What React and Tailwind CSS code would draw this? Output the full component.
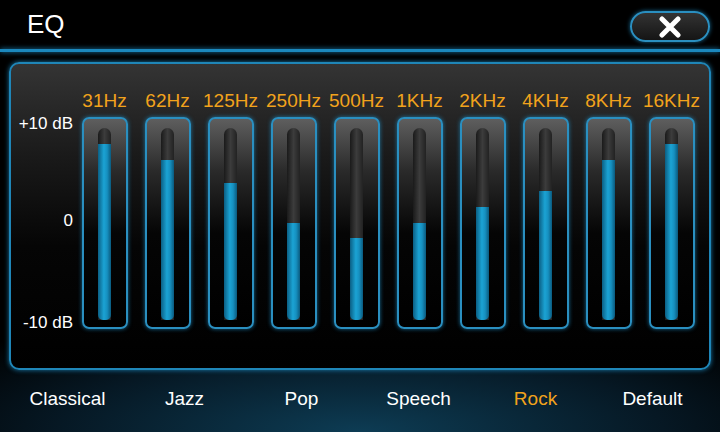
import React from 'react';

const bands = [
  { label: '31Hz', fill: 176 },
  { label: '62Hz', fill: 160 },
  { label: '125Hz', fill: 137 },
  { label: '250Hz', fill: 97 },
  { label: '500Hz', fill: 82 },
  { label: '1KHz', fill: 97 },
  { label: '2KHz', fill: 113 },
  { label: '4KHz', fill: 129 },
  { label: '8KHz', fill: 160 },
  { label: '16KHz', fill: 176 },
];

const presets = ['Classical', 'Jazz', 'Pop', 'Speech', 'Rock', 'Default'];

function Slider({ label, fill }) {
  return (
    <div className="flex flex-col items-center pt-[27px]">
      <div className="h-[19px] leading-[19px] text-[19px] text-[#f2a31c] whitespace-nowrap">{label}</div>
      {/* frame */}
      <div className="mt-[7px] w-[46px] h-[212px] rounded-[7px] border-2 border-[#2a8fc0] shadow-[0_0_4px_rgba(30,150,210,0.7)] bg-[linear-gradient(180deg,#5e5e5e_0%,#2a2a2a_25%,#050505_55%,#000_100%)] flex flex-col items-center pt-[9px]">
        {/* track */}
        <div className="w-[13px] h-[192px] rounded-t-full rounded-b-[5px] bg-[linear-gradient(90deg,#1a1a1a,#3c3c3c_50%,#222)] flex flex-col justify-end overflow-hidden">
          <div
            className="w-full rounded-b-[5px] bg-[linear-gradient(90deg,#0b5f84,#1ba3d4_45%,#1690c0_70%,#0a5a7e)]"
            style={{ height: fill }}
          />
        </div>
      </div>
    </div>
  );
}

export default function App() {
  return (
    <div className="w-[720px] h-[432px] overflow-hidden bg-black bg-[radial-gradient(ellipse_70%_30%_at_50%_100%,#0d3c54_0%,#061824_60%,#000_100%)] font-['Liberation_Sans',Arial,sans-serif] text-white">
      {/* header */}
      <div className="h-[49px] flex justify-between pl-[27px] pr-[10px]">
        <div className="mt-[12px] text-[26px] leading-[25px]">EQ</div>
        <button className="mt-[11px] w-[80px] h-[31px] rounded-full border-2 border-[#2a8fc0] shadow-[0_0_4px_rgba(30,150,210,0.7)] bg-[linear-gradient(180deg,#333,#151515)] flex items-center justify-center">
          <svg width="24" height="22" viewBox="0 0 24 22">
            <path d="M4 3 L20 19 M20 3 L4 19" stroke="#fff" strokeWidth="5" strokeLinecap="round" />
          </svg>
        </button>
      </div>
      <div className="h-[3px] bg-[#1b88bd] shadow-[0_0_5px_rgba(30,150,210,0.9)]" />

      {/* panel */}
      <div className="mx-[9px] mt-[10px] h-[308px] rounded-[10px] border-2 border-[#1f86b8] shadow-[0_0_5px_rgba(30,150,210,0.8)] bg-[linear-gradient(180deg,#343434_0%,#1a1a1a_30%,#050505_60%,#000_100%)] flex">
        <div className="w-[62px] flex flex-col items-end pt-[51px] text-[17px] leading-[17px]">
          <div className="whitespace-nowrap">+10 dB</div>
          <div className="mt-[80px]">0</div>
          <div className="mt-[85px] whitespace-nowrap">-10 dB</div>
        </div>
        <div className="grid grid-cols-[repeat(10,63px)]">
          {bands.map((b) => (
            <Slider key={b.label} label={b.label} fill={b.fill} />
          ))}
        </div>
      </div>

      {/* presets */}
      <div className="mx-[9px] mt-[18px] grid grid-cols-6 text-[19px] leading-[22px]">
        {presets.map((p) => (
          <div key={p} className={`text-center ${p === 'Rock' ? 'text-[#f2a31c]' : 'text-white'}`}>
            {p}
          </div>
        ))}
      </div>
    </div>
  );
}
